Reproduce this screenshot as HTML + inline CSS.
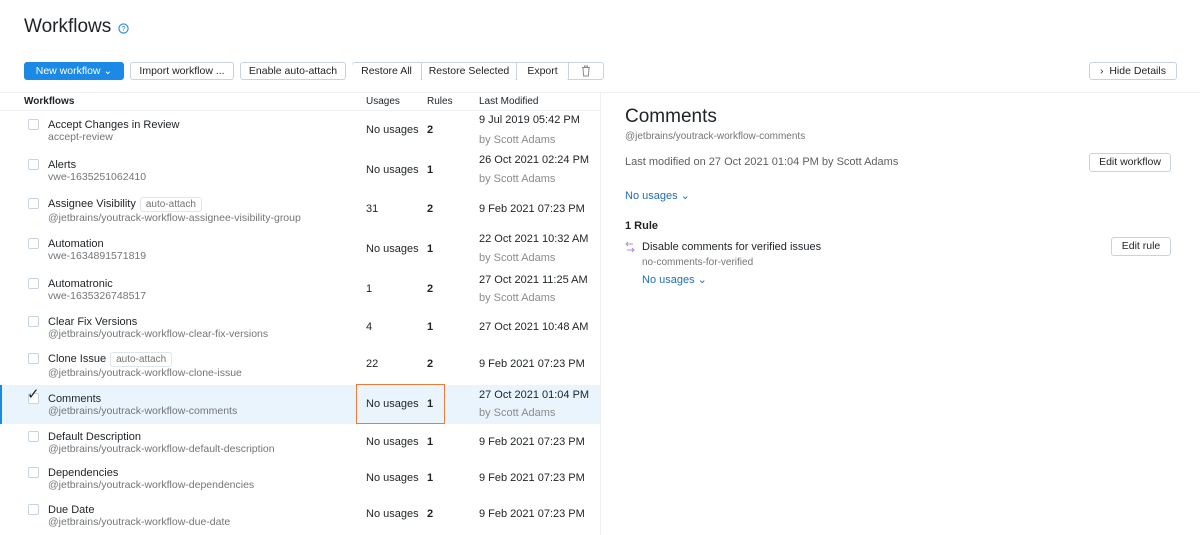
<!DOCTYPE html>
<html><head><meta charset="utf-8"><style>
*{margin:0;padding:0;box-sizing:border-box}
body{width:1200px;height:535px;overflow:hidden;background:#fff;font-family:"Liberation Sans",sans-serif;color:#1f2326;position:relative}
.a{position:absolute;white-space:nowrap;line-height:14px}
.t{font-size:11px;color:#1f2326}
.s{font-size:10.5px;color:#737577}
.g{font-size:11px;color:#8a8c8e}
.b{font-weight:bold}
.btn{position:absolute;top:62px;height:18px;border:1px solid #c9d3df;border-radius:3px;font-size:10.5px;line-height:16px;text-align:center;color:#1f2326;background:#fff}
.cb{position:absolute;left:28px;width:11px;height:11px;border:1px solid #c9d3df;border-radius:2px;background:#fff}
.tag{display:inline-block;border:1px solid #dfe5eb;border-radius:3px;font-size:10px;color:#737577;padding:0 5px;line-height:13px;margin-left:4px}
.link{color:#1f6fb5;font-size:11px}
</style></head><body>
<div class="a" style="left:24px;top:15px;font-size:19px;line-height:24px">Workflows</div>
<svg class="a" style="left:118px;top:23px" width="11" height="11" viewBox="0 0 11 11"><circle cx="5.5" cy="5.5" r="4.6" fill="none" stroke="#1a8ae6" stroke-width="1.1"/><text x="5.5" y="8" font-size="7" text-anchor="middle" fill="#1a8ae6" font-family="Liberation Sans">?</text></svg>

<div class="btn" style="left:24px;width:100px;background:#1a8ae6;border-color:#1a8ae6;color:#fff">New workflow ⌄</div>
<div class="btn" style="left:130px;width:104px">Import workflow ...</div>
<div class="btn" style="left:240px;width:106px">Enable auto-attach</div>
<div class="btn" style="left:352px;width:252px;border-radius:3px"></div>
<div class="btn" style="left:352px;width:69px;border:none;top:63px">Restore All</div>
<div class="a" style="left:421px;top:63px;width:1px;height:16px;background:#c9d3df"></div>
<div class="btn" style="left:422px;width:94px;border:none;top:63px">Restore Selected</div>
<div class="a" style="left:516px;top:63px;width:1px;height:16px;background:#c9d3df"></div>
<div class="btn" style="left:517px;width:51px;border:none;top:63px">Export</div>
<div class="a" style="left:568px;top:63px;width:1px;height:16px;background:#c9d3df"></div>
<svg class="a" style="left:581px;top:65px" width="10" height="12" viewBox="0 0 10 12"><path d="M1 2.5h8M3.5 2.5V1h3v1.5M2 2.5l.6 8.5h4.8l.6-8.5" fill="none" stroke="#8a8c8e" stroke-width="1"/></svg>
<div class="btn" style="left:1089px;width:88px">›&nbsp; Hide Details</div>

<div class="a" style="left:0;top:92px;width:1200px;height:1px;background:#eef1f4"></div>
<div class="a" style="left:600px;top:92px;width:1px;height:443px;background:#eef1f4"></div>
<div class="a" style="left:0;top:110px;width:600px;height:1px;background:#eef1f4"></div>
<div class="a t b" style="left:24px;top:95px;font-size:10px">Workflows</div>
<div class="a t" style="left:366px;top:95px;font-size:10px">Usages</div>
<div class="a t" style="left:427px;top:95px;font-size:10px">Rules</div>
<div class="a t" style="left:479px;top:95px;font-size:10px">Last Modified</div>

<div class="a" style="left:0;top:385px;width:600px;height:39px;background:#e9f4fd"></div>
<div class="a" style="left:0;top:385px;width:2px;height:39px;background:#1a8ae6"></div>
<div class="a" style="left:356px;top:384px;width:89px;height:40px;border:1.5px solid #f07a3a"></div>

<div class="cb" style="top:119px"></div><div class="a t" style="left:48px;top:118px">Accept Changes in Review</div><div class="a s" style="left:48px;top:130px">accept-review</div><div class="a t" style="left:366px;top:123px">No usages</div><div class="a t b" style="left:427px;top:123px">2</div><div class="a t" style="left:479px;top:113px">9 Jul 2019 05:42 PM</div><div class="a g" style="left:479px;top:133px">by Scott Adams</div>

<div class="cb" style="top:159px"></div><div class="a t" style="left:48px;top:158px">Alerts</div><div class="a s" style="left:48px;top:170px">vwe-1635251062410</div><div class="a t" style="left:366px;top:163px">No usages</div><div class="a t b" style="left:427px;top:163px">1</div><div class="a t" style="left:479px;top:153px">26 Oct 2021 02:24 PM</div><div class="a g" style="left:479px;top:172px">by Scott Adams</div>

<div class="cb" style="top:198px"></div><div class="a t" style="left:48px;top:197px">Assignee Visibility<span class="tag">auto-attach</span></div><div class="a s" style="left:48px;top:211px">@jetbrains/youtrack-workflow-assignee-visibility-group</div><div class="a t" style="left:366px;top:202px">31</div><div class="a t b" style="left:427px;top:202px">2</div><div class="a t" style="left:479px;top:202px">9 Feb 2021 07:23 PM</div>

<div class="cb" style="top:238px"></div><div class="a t" style="left:48px;top:237px">Automation</div><div class="a s" style="left:48px;top:249px">vwe-1634891571819</div><div class="a t" style="left:366px;top:242px">No usages</div><div class="a t b" style="left:427px;top:242px">1</div><div class="a t" style="left:479px;top:232px">22 Oct 2021 10:32 AM</div><div class="a g" style="left:479px;top:251px">by Scott Adams</div>

<div class="cb" style="top:278px"></div><div class="a t" style="left:48px;top:277px">Automatronic</div><div class="a s" style="left:48px;top:289px">vwe-1635326748517</div><div class="a t" style="left:366px;top:282px">1</div><div class="a t b" style="left:427px;top:282px">2</div><div class="a t" style="left:479px;top:273px">27 Oct 2021 11:25 AM</div><div class="a g" style="left:479px;top:291px">by Scott Adams</div>

<div class="cb" style="top:316px"></div><div class="a t" style="left:48px;top:315px">Clear Fix Versions</div><div class="a s" style="left:48px;top:327px">@jetbrains/youtrack-workflow-clear-fix-versions</div><div class="a t" style="left:366px;top:320px">4</div><div class="a t b" style="left:427px;top:320px">1</div><div class="a t" style="left:479px;top:320px">27 Oct 2021 10:48 AM</div>

<div class="cb" style="top:353px"></div><div class="a t" style="left:48px;top:352px">Clone Issue<span class="tag">auto-attach</span></div><div class="a s" style="left:48px;top:366px">@jetbrains/youtrack-workflow-clone-issue</div><div class="a t" style="left:366px;top:357px">22</div><div class="a t b" style="left:427px;top:357px">2</div><div class="a t" style="left:479px;top:357px">9 Feb 2021 07:23 PM</div>

<div class="cb" style="top:393px"></div><div class="a" style="left:27px;top:387px;font-size:15px;line-height:15px">✓</div><div class="a t" style="left:48px;top:392px">Comments</div><div class="a s" style="left:48px;top:404px">@jetbrains/youtrack-workflow-comments</div><div class="a t" style="left:366px;top:397px">No usages</div><div class="a t b" style="left:427px;top:397px">1</div><div class="a t" style="left:479px;top:388px">27 Oct 2021 01:04 PM</div><div class="a g" style="left:479px;top:406px">by Scott Adams</div>

<div class="cb" style="top:431px"></div><div class="a t" style="left:48px;top:430px">Default Description</div><div class="a s" style="left:48px;top:442px">@jetbrains/youtrack-workflow-default-description</div><div class="a t" style="left:366px;top:435px">No usages</div><div class="a t b" style="left:427px;top:435px">1</div><div class="a t" style="left:479px;top:435px">9 Feb 2021 07:23 PM</div>

<div class="cb" style="top:467px"></div><div class="a t" style="left:48px;top:466px">Dependencies</div><div class="a s" style="left:48px;top:478px">@jetbrains/youtrack-workflow-dependencies</div><div class="a t" style="left:366px;top:471px">No usages</div><div class="a t b" style="left:427px;top:471px">1</div><div class="a t" style="left:479px;top:471px">9 Feb 2021 07:23 PM</div>

<div class="cb" style="top:504px"></div><div class="a t" style="left:48px;top:503px">Due Date</div><div class="a s" style="left:48px;top:515px">@jetbrains/youtrack-workflow-due-date</div><div class="a t" style="left:366px;top:507px">No usages</div><div class="a t b" style="left:427px;top:507px">2</div><div class="a t" style="left:479px;top:507px">9 Feb 2021 07:23 PM</div>

<div class="a" style="left:625px;top:105px;font-size:19px;line-height:24px">Comments</div>
<div class="a s" style="left:625px;top:130px;font-size:10px">@jetbrains/youtrack-workflow-comments</div>
<div class="a" style="left:625px;top:155px;font-size:11px;color:#5c5f62">Last modified on 27 Oct 2021 01:04 PM by Scott Adams</div>
<div class="btn" style="left:1089px;top:153px;width:82px;height:19px">Edit workflow</div>
<div class="a link" style="left:625px;top:189px">No usages ⌄</div>
<div class="a t b" style="left:625px;top:219px">1 Rule</div>
<svg class="a" style="left:625px;top:241px" width="10" height="12" viewBox="0 0 10 12"><path d="M1 3h7M3 1L1 3l2 2M9 9H2M7 7l2 2-2 2" fill="none" stroke="#b48ae6" stroke-width="1"/></svg>
<div class="a t" style="left:642px;top:240px">Disable comments for verified issues</div>
<div class="a s" style="left:642px;top:256px;font-size:10px">no-comments-for-verified</div>
<div class="btn" style="left:1111px;top:237px;width:60px;height:19px">Edit rule</div>
<div class="a link" style="left:642px;top:273px">No usages ⌄</div>
</body></html>
